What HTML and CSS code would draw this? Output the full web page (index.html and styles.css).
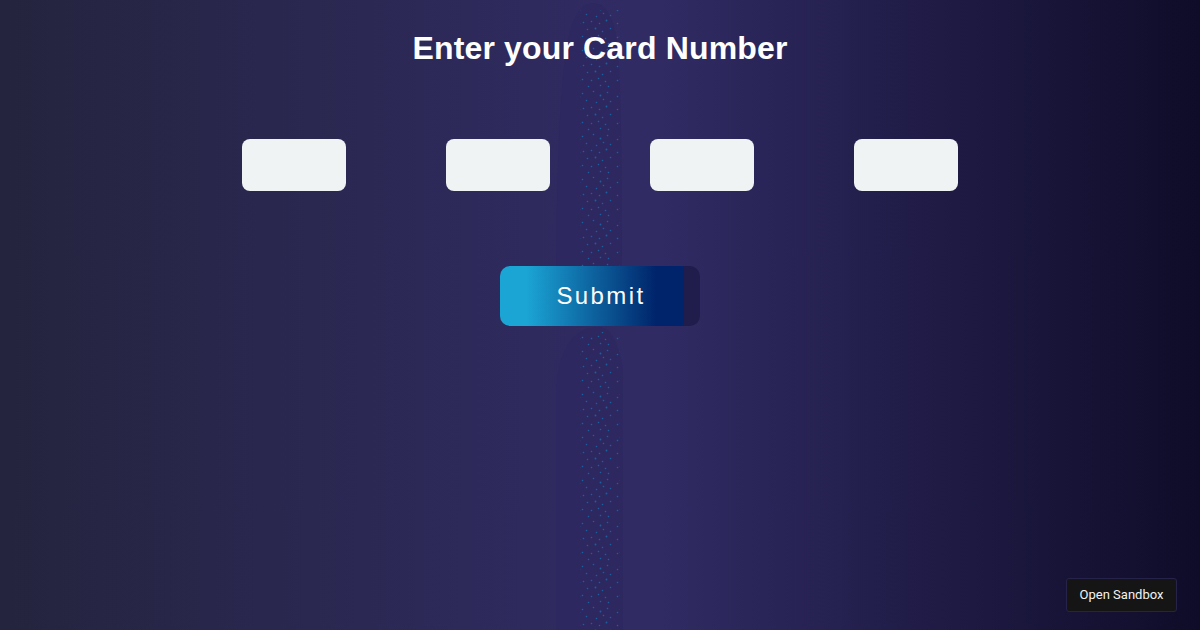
FILE: index.html
```html
<!DOCTYPE html>
<html lang="en">
<head>
<meta charset="utf-8">
<title>Enter your Card Number</title>
<link rel="stylesheet" href="styles.css">
</head>
<body>
<svg class="streak" width="70" height="630" viewBox="0 0 70 630" aria-hidden="true">
  <defs>
    <pattern id="dots" width="38" height="43" patternUnits="userSpaceOnUse" x="25" y="3">
      <g class="dot">
        <circle cx="1.5" cy="4.5" r=".8"/><circle cx="12.5" cy="2.5" r=".8"/><circle cx="19.5" cy="6.5" r=".9"/><circle cx="26.5" cy="3.5" r=".8"/><circle cx="36.5" cy="7.5" r=".8"/>
        <circle cx="5.5" cy="11.5" r=".8"/><circle cx="15.5" cy="13.5" r=".8"/><circle cx="22.5" cy="10.5" r=".8"/><circle cx="29.5" cy="12.5" r=".8"/>
        <circle cx="2.5" cy="19.5" r=".8"/><circle cx="10.5" cy="18.5" r=".8"/><circle cx="18.5" cy="20.5" r=".8"/><circle cx="25.5" cy="17.5" r=".9"/><circle cx="36.5" cy="20.5" r=".8"/>
        <circle cx="6.5" cy="26.5" r=".8"/><circle cx="14.5" cy="25.5" r=".9"/><circle cx="21.5" cy="28.5" r=".8"/><circle cx="29.5" cy="25.5" r=".8"/>
        <circle cx="1.5" cy="33.5" r=".8"/><circle cx="10.5" cy="34.5" r=".8"/><circle cx="17.5" cy="32.5" r=".8"/><circle cx="24.5" cy="35.5" r=".8"/><circle cx="36.5" cy="34.5" r=".8"/>
        <circle cx="7.5" cy="40.5" r=".8"/><circle cx="19.5" cy="39.5" r=".8"/><circle cx="27.5" cy="40.5" r=".8"/>
      </g>
    </pattern>
  </defs>
  <path class="bell" d="M0 326C0 200 2 110 10 50C16 16 24 3 37 3C50 3 58 16 62 50C66 110 66 200 66 326Z"/>
  <path class="bell" d="M0 630V387C2 365 8 345 20 335C28 329 34 327 44 327C54 328 62 340 67 370V630Z"/>
  <rect x="24" y="10" width="40" height="316" fill="url(#dots)"/>
  <rect x="24" y="332" width="40" height="298" fill="url(#dots)"/>
</svg>
<main class="card-form">
  <h1 class="title">Enter your Card Number</h1>
  <div class="fields">
    <input class="field" type="text" maxlength="4" aria-label="Card group 1">
    <input class="field" type="text" maxlength="4" aria-label="Card group 2">
    <input class="field" type="text" maxlength="4" aria-label="Card group 3">
    <input class="field" type="text" maxlength="4" aria-label="Card group 4">
  </div>
  <button class="submit" type="button">Submit</button>
</main>
<a class="sandbox" href="#">Open Sandbox</a>
</body>
</html>
```
FILE: styles.css
```css
* { box-sizing: border-box; }
html, body { height: 100%; }
body {
  margin: 0;
  overflow: hidden;
  position: relative;
  background: linear-gradient(to right, #24243e 0%, #302b63 52%, #302b63 55%, #0f0c29 100%);
  font-family: "Liberation Sans", Arial, sans-serif;
  color: #fff;
}
.streak {
  position: absolute;
  top: 0;
  left: 556px;
}
.bell { fill: #2d2860; }
.dot { fill: #1b5f9f; }
.card-form {
  position: relative;
  display: flex;
  flex-direction: column;
  align-items: center;
}
.title {
  margin: 30px 0 0;
  font-size: 32px;
  line-height: 37px;
  font-weight: 700;
  letter-spacing: 0.16px;
}
.fields {
  display: flex;
  gap: 100px;
  margin-top: 72px;
}
.field {
  width: 104px;
  height: 52px;
  border: 0;
  border-radius: 8px;
  background: #eff3f4;
}
.submit {
  position: relative;
  width: 200px;
  height: 60px;
  margin-top: 75px;
  padding: 0 0 0 2px;
  border: 0;
  border-radius: 10px;
  color: #fff;
  font-family: inherit;
  font-size: 24px;
  letter-spacing: 2.4px;
  background: linear-gradient(to right, #1ba5d5 13%, #00246b 78%, #00246b 92%, #201c4b 92%);
}
.sandbox {
  position: absolute;
  right: 23px;
  bottom: 18px;
  width: 111px;
  height: 34px;
  padding-bottom: 2px;
  display: flex;
  align-items: center;
  justify-content: center;
  background: #151515;
  border: 1px solid #26234a;
  border-radius: 3px;
  color: #f2f2f2;
  font-family: Roboto, sans-serif;
  font-size: 13px;
  text-decoration: none;
}
```
